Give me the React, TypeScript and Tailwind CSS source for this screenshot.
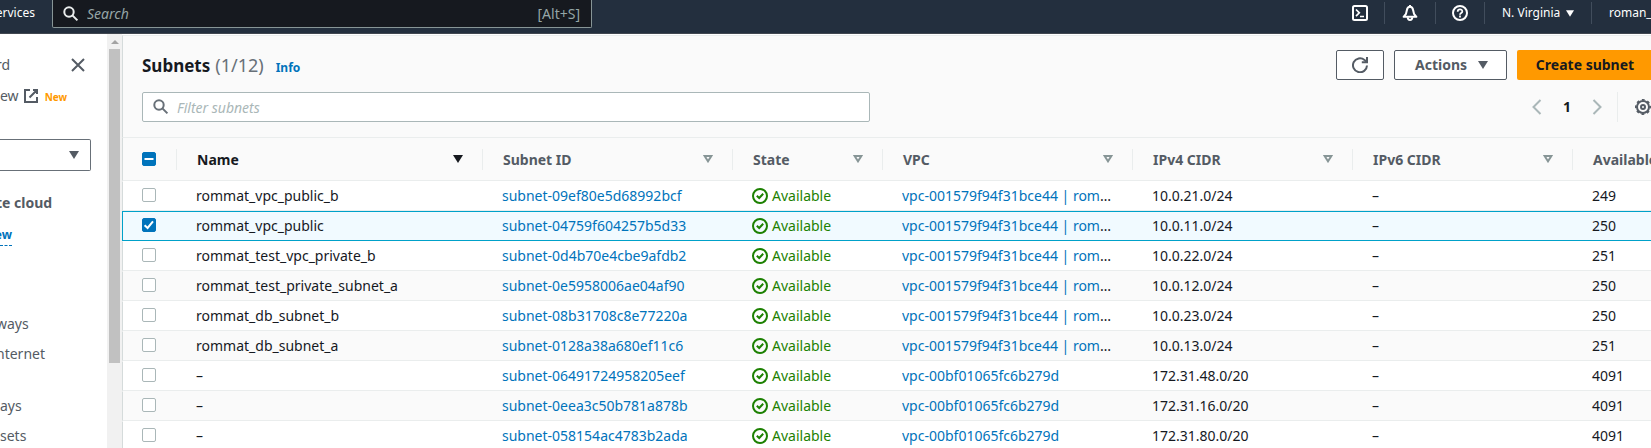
import React from 'react';

type Subnet = {
  name: string;
  id: string;
  vpc: string;
  cidr: string;
  available: string;
  selected?: boolean;
};

const ROMMAT_VPC = 'vpc-001579f94f31bce44 | rommat_vpc';
const DEFAULT_VPC = 'vpc-00bf01065fc6b279d';

const subnets: Subnet[] = [
  { name: 'rommat_vpc_public_b', id: 'subnet-09ef80e5d68992bcf', vpc: ROMMAT_VPC, cidr: '10.0.21.0/24', available: '249' },
  { name: 'rommat_vpc_public', id: 'subnet-04759f604257b5d33', vpc: ROMMAT_VPC, cidr: '10.0.11.0/24', available: '250', selected: true },
  { name: 'rommat_test_vpc_private_b', id: 'subnet-0d4b70e4cbe9afdb2', vpc: ROMMAT_VPC, cidr: '10.0.22.0/24', available: '251' },
  { name: 'rommat_test_private_subnet_a', id: 'subnet-0e5958006ae04af90', vpc: ROMMAT_VPC, cidr: '10.0.12.0/24', available: '250' },
  { name: 'rommat_db_subnet_b', id: 'subnet-08b31708c8e77220a', vpc: ROMMAT_VPC, cidr: '10.0.23.0/24', available: '250' },
  { name: 'rommat_db_subnet_a', id: 'subnet-0128a38a680ef11c6', vpc: ROMMAT_VPC, cidr: '10.0.13.0/24', available: '251' },
  { name: '–', id: 'subnet-06491724958205eef', vpc: DEFAULT_VPC, cidr: '172.31.48.0/20', available: '4091' },
  { name: '–', id: 'subnet-0eea3c50b781a878b', vpc: DEFAULT_VPC, cidr: '172.31.16.0/20', available: '4091' },
  { name: '–', id: 'subnet-058154ac4783b2ada', vpc: DEFAULT_VPC, cidr: '172.31.80.0/20', available: '4091' },
];

const columns = [
  { label: 'Name', width: 'w-[306px]', sorted: true },
  { label: 'Subnet ID', width: 'w-[250px]' },
  { label: 'State', width: 'w-[150px]' },
  { label: 'VPC', width: 'w-[250px]' },
  { label: 'IPv4 CIDR', width: 'w-[220px]' },
  { label: 'IPv6 CIDR', width: 'w-[220px]' },
];

function Icon({ className = '', children }: { className?: string; children: React.ReactNode }) {
  return (
    <svg
      viewBox="0 0 16 16"
      fill="none"
      stroke="currentColor"
      strokeWidth="2"
      aria-hidden="true"
      className={`size-4 shrink-0 ${className}`}
    >
      {children}
    </svg>
  );
}

const SearchIcon = ({ className }: { className?: string }) => (
  <Icon className={className}>
    <circle cx="6" cy="6" r="4.7" />
    <path d="M9.4 9.4 14.4 14.4" />
  </Icon>
);

function Caret({ className = '' }: { className?: string }) {
  return (
    <svg viewBox="0 0 10 8" fill="currentColor" aria-hidden="true" className={`shrink-0 ${className}`}>
      <path d="M0 0H10L5 8Z" />
    </svg>
  );
}

function SortIcon({ sorted }: { sorted?: boolean }) {
  return sorted ? (
    <Caret className="h-2 w-2.5 text-[#16191f]" />
  ) : (
    <svg viewBox="0 0 10 8" fill="none" stroke="currentColor" strokeWidth="2" aria-hidden="true" className="h-2 w-2.5 shrink-0 text-[#879596]">
      <path d="M1.6 1H8.4L5 6.3Z" />
    </svg>
  );
}

function Checkbox({ label, checked, mixed }: { label: string; checked?: boolean; mixed?: boolean }) {
  const on = checked || mixed;
  return (
    <span className="relative block size-3.5">
      <input
        type="checkbox"
        aria-label={label}
        defaultChecked={on}
        className="block size-3.5 appearance-none rounded-xs border border-[#aab7b8] bg-white checked:border-[#0073bb] checked:bg-[#0073bb]"
      />
      {on && (
        <svg viewBox="0 0 14 14" fill="none" stroke="#fff" strokeWidth="2" className="pointer-events-none absolute inset-0 size-3.5">
          <path d={mixed ? 'M2.5 7H11.5' : 'M2.6 7.2 5.6 10 11 3.4'} />
        </svg>
      )}
    </span>
  );
}

function TopBar() {
  return (
    <header className="flex h-[34px] items-start justify-between overflow-hidden border-b border-[#414750] bg-[#232f3e] text-xs text-white">
      <div className="flex">
        <button className="h-[26px] w-[52px] pr-[17px]">
          <span className="flex justify-end">ervices</span>
        </button>
        <label className="flex h-7 w-[540px] items-center rounded-b-xs border border-t-0 border-[#879596] bg-[#16191f] pl-2.5 pr-[11px] text-[#95a5a6]">
          <SearchIcon className="text-[#eaeded]" />
          <input
            type="search"
            aria-label="Search"
            placeholder="Search"
            className="ml-2 min-w-0 flex-1 bg-transparent text-sm italic outline-none placeholder:text-[#95a5a6]"
          />
          <span className="text-sm">[Alt+S]</span>
        </label>
      </div>
      <nav className="flex h-[26px] items-center">
        <button aria-label="CloudShell" className="px-4">
          <Icon>
            <rect x="1" y="1" width="14" height="14" rx="1.5" />
            <path d="M4 4.5 7.3 7.8 4 11.1M8 11.5H12" strokeWidth="1.7" />
          </Icon>
        </button>
        <span className="h-[22px] w-px bg-[#414d5c]" />
        <button aria-label="Notifications" className="px-[17px]">
          <Icon>
            <path d="M8 1.8C5.8 1.8 5 3.5 4.8 5.6L4 8.8 1.6 11.8H14.4L12 8.8 11.2 5.6C11 3.5 10.2 1.8 8 1.8ZM8 0V2" strokeLinejoin="round" />
            <path d="M5.7 12.2C5.8 15.8 10.2 15.8 10.3 12.2" />
          </Icon>
        </button>
        <span className="h-[22px] w-px bg-[#414d5c]" />
        <button aria-label="Support" className="px-4">
          <Icon>
            <circle cx="8" cy="8" r="7" />
            <path d="M5.7 6.7C5.7 3.6 10.3 3.7 10.3 6.4 10.3 8 8 8 8 9.7M8 10.6V12.5" strokeWidth="1.8" />
          </Icon>
        </button>
        <span className="h-[22px] w-px bg-[#414d5c]" />
        <button className="flex w-[106px] items-center gap-1.5 pl-[17px]">
          N. Virginia
          <Caret className="h-[7px] w-2" />
        </button>
        <span className="h-[22px] w-px bg-[#414d5c]" />
        <button className="w-[59px] pl-[17px] text-left">roman_</button>
      </nav>
    </header>
  );
}

function SideBar() {
  return (
    <aside className="flex w-[122px] shrink-0 overflow-hidden text-sm leading-[22px] text-[#545b64]">
      <div className="min-w-0 flex-1">
        <div className="flex items-center justify-between pr-[21px] pt-5">
          <a href="#dashboard" className="-ml-1">rd</a>
          <button aria-label="Close navigation">
            <Icon>
              <path d="M2 2 14 14M14 2 2 14" />
            </Icon>
          </button>
        </div>
        <div className="flex items-center pt-2">
          <a href="#global-view" className="flex items-center gap-1">
            ew
            <Icon>
              <path d="M7 2H2V14H14V9M10 2H14V6M14 2 6.5 9.5" />
            </Icon>
          </a>
          <span className="ml-1.5 pt-0.5 text-[10px] font-bold text-[#ff9900]">New</span>
        </div>
        <button
          aria-label="Filter by VPC"
          className="mt-[31px] flex h-8 w-[91px] items-center justify-end rounded-r-xs border border-l-0 border-[#687078] bg-white pr-[11px]"
        >
          <Caret className="h-2 w-2.5" />
        </button>
        <h2 className="-ml-1 pt-[21px] font-bold">te cloud</h2>
        <a href="#new" className="mt-[11px] block w-3 border-b border-dashed border-[#0073bb] text-xs font-bold leading-5 text-[#0073bb]">
          <span className="flex justify-end">ew</span>
        </a>
        <nav className="-ml-1 flex flex-col pt-[67px]">
          <a href="#gateways">ways</a>
          <a href="#internet" className="mt-2">nternet</a>
          <a href="#nat" className="ml-1 mt-[30px]">ays</a>
          <a href="#sets" className="ml-1 mt-2">sets</a>
        </nav>
      </div>
      <div className="flex w-[15px] flex-col items-center bg-[#f1f1f1]">
        <svg viewBox="0 0 8 4" className="mt-1.5 h-1 w-2 shrink-0" fill="#a3a3a3" aria-hidden="true">
          <path d="M0 4 4 0 8 4Z" />
        </svg>
        <div className="mt-[5px] h-[314px] w-[11px] shrink-0 bg-[#c1c1c1]" />
      </div>
    </aside>
  );
}

function Toolbar() {
  return (
    <div className="border-b border-l border-t border-b-[#eaeded] border-l-[#d5dbdb] border-t-[#eaeded] bg-[#fafafa] pb-[15px] pl-[19px] pt-3.5">
      <div className="flex items-center justify-between">
        <h1 className="flex h-[30px] items-baseline text-[17px] font-bold leading-[30px] text-[#16191f]">
          Subnets
          <span className="ml-[5px] text-lg font-normal leading-[30px] text-[#687078]">(1/12)</span>
          <a href="#info" className="ml-3 text-xs text-[#0073bb]">Info</a>
        </h1>
        <div className="flex gap-2.5 text-sm font-bold">
          <button aria-label="Refresh" className="flex h-[30px] w-12 items-center justify-center rounded-xs border border-[#545b64] bg-white text-[#545b64]">
            <Icon>
              <path d="M15 8.5A7 7 0 1 1 12.5 2.9L14.6 5" />
              <path d="M15 0V5.2H9.8" />
            </Icon>
          </button>
          <button className="flex h-[30px] w-[113px] items-center justify-between rounded-xs border border-[#545b64] bg-white pl-5 pr-[18px] text-[#545b64]">
            Actions
            <Caret className="h-2 w-2.5" />
          </button>
          <button className="h-[30px] w-[134px] rounded-l-xs bg-[#ff9900] pl-0.5 text-[#16191f]">Create subnet</button>
        </div>
      </div>
      <div className="mt-3 flex items-center justify-between">
        <label className="flex h-[30px] w-full max-w-[728px] items-center rounded-xs border border-[#aab7b8] bg-white px-2.5">
          <SearchIcon className="text-[#687078]" />
          <input
            type="search"
            aria-label="Filter subnets"
            placeholder="Filter subnets"
            className="ml-2 h-full min-w-0 flex-1 bg-transparent pt-px text-sm italic outline-none placeholder:text-[#aab7b8]"
          />
        </label>
        <div className="flex h-[30px] items-center text-sm font-bold text-[#16191f]">
          <button aria-label="Previous page" className="text-[#aab7b8]">
            <Icon>
              <path d="M11.5 1 4.5 8 11.5 15" />
            </Icon>
          </button>
          <button className="w-11 text-center">1</button>
          <button aria-label="Next page" className="text-[#aab7b8]">
            <Icon>
              <path d="M4.5 1 11.5 8 4.5 15" />
            </Icon>
          </button>
          <span className="ml-3 mr-[17px] h-[30px] w-px bg-[#eaeded]" />
          <button aria-label="Preferences" className="text-[#545b64]">
            <Icon>
              <circle cx="8" cy="8" r="6" />
              <circle cx="8" cy="8" r="7.2" strokeWidth="1.6" strokeDasharray="2.83 2.83" strokeDashoffset="1.4" />
              <circle cx="8" cy="8" r="2" />
            </Icon>
          </button>
        </div>
      </div>
    </div>
  );
}

function SubnetTable() {
  return (
    <table className="w-full table-fixed border-separate border-spacing-0 text-left text-sm leading-[22px]">
      <thead>
        <tr className="h-[43px] bg-[#fafafa] text-[#545b64]">
          <th className="w-[55px] border-b border-l border-b-[#eaeded] border-l-[#d5dbdb] p-0 pl-[19px]">
            <div className="flex items-center justify-between">
              <Checkbox label="Select all subnets" mixed />
              <span className="h-[21px] w-px bg-[#eaeded]" />
            </div>
          </th>
          {columns.map((column) => (
            <th key={column.label} className={`border-b border-[#eaeded] p-0 pl-5 ${column.width}`}>
              <div className={`flex h-[22px] items-center ${column.sorted ? 'text-[#16191f]' : ''}`}>
                <span className="flex-1 pt-px">{column.label}</span>
                <SortIcon sorted={column.sorted} />
                <span className="ml-[19px] h-[21px] w-px bg-[#eaeded]" />
              </div>
            </th>
          ))}
          <th className="overflow-hidden whitespace-nowrap border-b border-[#eaeded] p-0 pl-5 pt-px">Available</th>
        </tr>
      </thead>
      <tbody>
        {subnets.map((subnet, index) => {
          const tone = subnet.selected
            ? 'border-y-[#00a1c9] bg-[#f1faff]'
            : `border-t-transparent border-b-[#eaeded] ${index % 2 && index > 1 ? 'bg-[#fafafa]' : 'bg-white'}`;
          const cell = `h-[30px] border-y p-0 pl-[19px] ${tone}`;
          return (
            <tr key={subnet.id} className="text-[#16191f]">
              <td className={`${cell} border-l pb-0.5 ${subnet.selected ? 'border-l-[#00a1c9]' : 'border-l-[#d5dbdb]'}`}>
                <Checkbox label={`Select ${subnet.id}`} checked={subnet.selected} />
              </td>
              <td className={cell}>{subnet.name}</td>
              <td className={cell}>
                <a href={`#${subnet.id}`} className="text-[#0073bb]">{subnet.id}</a>
              </td>
              <td className={cell}>
                <span className="flex items-center gap-1 text-[#1d8102]">
                  <Icon>
                    <circle cx="8" cy="8" r="7" />
                    <path d="M4.8 7.8 7.2 10 11.2 5.8" />
                  </Icon>
                  Available
                </span>
              </td>
              <td className={`${cell} pr-5`}>
                <div className="truncate">
                  <a href="#vpc" className="text-[#0073bb]">{subnet.vpc}</a>
                </div>
              </td>
              <td className={cell}>{subnet.cidr}</td>
              <td className={cell}>–</td>
              <td className={cell}>{subnet.available}</td>
            </tr>
          );
        })}
      </tbody>
    </table>
  );
}

export default function App() {
  return (
    <div className="flex h-screen flex-col overflow-hidden bg-white font-['Noto_Sans',sans-serif]">
      <TopBar />
      <div className="flex min-h-0 flex-1">
        <SideBar />
        <main className="min-w-0 flex-1 pt-px">
          <Toolbar />
          <SubnetTable />
        </main>
      </div>
    </div>
  );
}
